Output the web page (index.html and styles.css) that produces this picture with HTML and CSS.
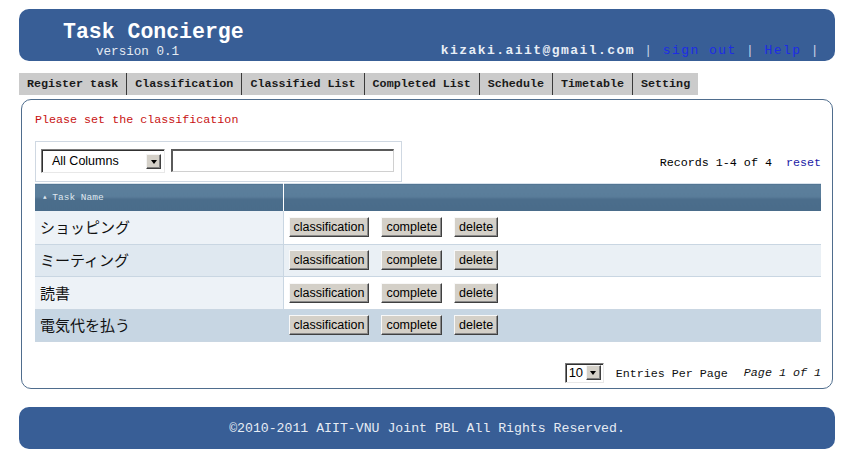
FILE: index.html
```html
<!DOCTYPE html>
<html>
<head>
<meta charset="utf-8">
<title>Task Concierge</title>
<link rel="stylesheet" href="styles.css">
</head>
<body>
<div class="page">
  <header class="header">
    <div class="brand">
      <div class="title">Task Concierge</div>
      <div class="version">version 0.1</div>
    </div>
    <div class="user"><span class="email">kizaki.aiit@gmail.com</span><span class="pipe">&nbsp;|&nbsp;</span><a class="hlink" href="#">sign out</a><span class="pipe">&nbsp;|&nbsp;</span><a class="hlink" href="#">Help</a><span class="pipe">&nbsp;|</span></div>
  </header>

  <nav class="tabs">
    <span class="tab">Register task</span><span class="tab">Classification</span><span class="tab">Classified List</span><span class="tab">Completed List</span><span class="tab">Schedule</span><span class="tab">Timetable</span><span class="tab last">Setting</span>
  </nav>

  <main class="content">
    <div class="message">Please set the classification</div>

    <div class="filter-row">
      <div class="filter-box">
        <div class="select wide"><span class="select-text">All Columns</span><span class="select-btn"><span class="arrow"></span></span></div>
        <div class="text-input"></div>
      </div>
      <div class="records">Records 1-4 of 4<a class="reset" href="#">reset</a></div>
    </div>

    <table class="grid">
      <thead>
        <tr><th class="col-name"><span class="tri">&#9650;</span> Task Name</th><th class="col-act"></th></tr>
      </thead>
      <tbody>
        <tr class="odd"><td class="name">ショッピング</td><td class="acts"><span class="btn">classification</span><span class="btn">complete</span><span class="btn">delete</span></td></tr>
        <tr class="even"><td class="name">ミーティング</td><td class="acts"><span class="btn">classification</span><span class="btn">complete</span><span class="btn">delete</span></td></tr>
        <tr class="odd"><td class="name">読書</td><td class="acts"><span class="btn">classification</span><span class="btn">complete</span><span class="btn">delete</span></td></tr>
        <tr class="hover"><td class="name">電気代を払う</td><td class="acts"><span class="btn">classification</span><span class="btn">complete</span><span class="btn">delete</span></td></tr>
      </tbody>
    </table>

    <div class="pager">
      <div class="select small"><span class="select-text">10</span><span class="select-btn"><span class="arrow"></span></span></div>
      <span class="entries">Entries Per Page</span>
      <span class="pageinfo">Page 1 of 1</span>
    </div>
  </main>

  <footer class="footer">©2010-2011 AIIT-VNU Joint PBL All Rights Reserved.</footer>
</div>
</body>
</html>
```

FILE: styles.css
```css
html, body {
  margin: 0;
  padding: 0;
  background: #ffffff;
}
body {
  font-family: "Liberation Mono", "Courier New", monospace;
  color: #111;
}
.page {
  margin: 9px 0 0 19px;
  width: 816px;
}

/* header */
.header {
  height: 52px;
  background: #385e96;
  border-radius: 10px;
  display: flex;
  justify-content: space-between;
  align-items: flex-start;
  box-sizing: border-box;
  padding: 11px 15px 0 44px;
}
.title {
  font-size: 21.5px;
  font-weight: bold;
  color: #ffffff;
  line-height: 24px;
}
.version {
  font-size: 12.6px;
  color: #e4eaf2;
  line-height: 14px;
  margin: 1px 0 0 33px;
}
.user {
  margin-top: 23px;
  font-size: 13px;
  line-height: 16px;
  letter-spacing: 1.45px;
  white-space: nowrap;
}
.email {
  color: #e8eef6;
  font-weight: bold;
}
.pipe {
  color: #c9d5e8;
}
.hlink {
  color: #1d2ce6;
  text-decoration: none;
}

/* tabs */
.tabs {
  display: flex;
  margin-top: 12px;
  height: 22px;
}
.tab {
  background: #cbcbcb;
  padding: 0 8px;
  border-right: 1px solid #3a3a3a;
  font-size: 11.7px;
  font-weight: bold;
  line-height: 23px;
  color: #1a1a1a;
  white-space: pre;
}
.tab.last {
  border-right: none;
  padding-right: 8px;
}

/* content */
.content {
  margin: 4px 0 0 2px;
  width: 812px;
  height: 290px;
  box-sizing: border-box;
  border: 1px solid #4f6d8d;
  border-radius: 10px;
  padding: 13px 11px 0 13px;
}
.message {
  color: #c81212;
  font-size: 11.7px;
  line-height: 15px;
}
.filter-row {
  margin-top: 13px;
  display: flex;
  justify-content: space-between;
  align-items: center;
}
.filter-box {
  width: 367px;
  height: 41px;
  box-sizing: border-box;
  border: 1px solid #cfd8e2;
  padding: 7px 0 0 5px;
  display: flex;
  gap: 6px;
  align-items: flex-start;
}
.select {
  display: flex;
  align-items: center;
  justify-content: space-between;
  background: #fff;
  box-sizing: border-box;
  border-top: 1px solid #7b7b7b;
  border-left: 1px solid #7b7b7b;
  border-right: 1px solid #e8e8e8;
  border-bottom: 1px solid #e8e8e8;
  box-shadow: inset 1px 1px 0 #303030;
  font-family: "Liberation Sans", Arial, sans-serif;
  color: #000;
}
.select.wide {
  width: 124px;
  height: 24px;
  padding: 0 3px 0 10px;
  font-size: 12.5px;
}
.select.small {
  width: 39px;
  height: 20px;
  padding: 0 2px 0 3px;
  font-size: 13px;
}
.select-btn {
  width: 15px;
  height: 15px;
  box-sizing: border-box;
  background: #d4d0c8;
  border-top: 1px solid #f4f4f4;
  border-left: 1px solid #f4f4f4;
  border-right: 1px solid #404040;
  border-bottom: 1px solid #404040;
  box-shadow: inset -1px -1px 0 #808080;
  display: flex;
  align-items: center;
  justify-content: center;
}
.arrow {
  width: 0;
  height: 0;
  border-left: 3.5px solid transparent;
  border-right: 3.5px solid transparent;
  border-top: 4px solid #000;
  margin-top: 1px;
}
.text-input {
  width: 223px;
  height: 23px;
  box-sizing: border-box;
  background: #fff;
  border-top: 2px solid #5a5a5a;
  border-left: 2px solid #5a5a5a;
  border-right: 1px solid #d0d0d0;
  border-bottom: 1px solid #d0d0d0;
}
.records {
  font-size: 11.7px;
  line-height: 14px;
  color: #000;
  margin-top: 2px;
}
.reset {
  margin-left: 14px;
  color: #1a1aa6;
  text-decoration: none;
}

/* grid */
.grid {
  margin-top: 1px;
  width: 786px;
  border-collapse: collapse;
  border-spacing: 0;
}
.grid th {
  height: 27px;
  padding: 0;
  background: linear-gradient(#5c7f9c, #5a7d9a 45%, #4b6d8b 55%, #4a6c8a);
  text-align: left;
  color: #dfe7ef;
  font-family: "Liberation Mono", monospace;
  font-size: 9.5px;
  font-weight: normal;
}
.grid th.col-name {
  width: 248px;
  padding-left: 8px;
  box-sizing: border-box;
  border-right: 1px solid #ffffff;
  border-top: 1px solid #d8e2ec;
}
.grid th.col-act {
  border-top: 1px solid #d8e2ec;
}
.tri {
  font-size: 6px;
  position: relative;
  top: -1px;
}
.grid td {
  height: 33px;
  padding: 0;
  border-bottom: 1px solid #c9d6e2;
  box-sizing: border-box;
}
.grid tr.even td,
.grid tr.hover td {
  height: 32px;
}
.grid td.name {
  padding-left: 5px;
  padding-bottom: 1px;
  font-family: "Noto Sans CJK JP", "Noto Sans", sans-serif;
  font-size: 15px;
  color: #111;
  border-right: 1px solid #c9d6e2;
}
.grid td.acts {
  padding-left: 5px;
  white-space: nowrap;
}
.grid tr.odd td.name { background: #edf2f7; }
.grid tr.odd td.acts { background: #ffffff; }
.grid tr.even td.name { background: #dfe8f0; }
.grid tr.even td.acts { background: #eaf0f5; }
.grid tr.hover td { background: #c7d6e3; border-right-color: #c7d6e3; }

.btn {
  display: inline-block;
  vertical-align: middle;
  height: 20px;
  box-sizing: border-box;
  padding: 0 4px;
  margin-right: 12px;
  background: #d4d0c8;
  border-top: 1px solid #f8f8f8;
  border-left: 1px solid #f8f8f8;
  border-right: 1px solid #404040;
  border-bottom: 1px solid #404040;
  box-shadow: inset -1px -1px 0 #8a8a8a;
  font-family: "Liberation Sans", Arial, sans-serif;
  font-size: 12.5px;
  line-height: 18px;
  color: #000;
}

/* pager */
.pager {
  margin-top: 21px;
  display: flex;
  justify-content: flex-end;
  align-items: center;
  font-size: 11.7px;
}
.entries {
  margin-left: 12px;
  margin-top: 3px;
}
.pageinfo {
  margin-left: 16px;
  font-style: italic;
  margin-top: 1px;
}

/* footer */
.footer {
  margin-top: 18px;
  height: 42px;
  background: #385e96;
  border-radius: 10px;
  color: #e6ecf4;
  font-size: 13.2px;
  line-height: 43px;
  text-align: center;
}
```
